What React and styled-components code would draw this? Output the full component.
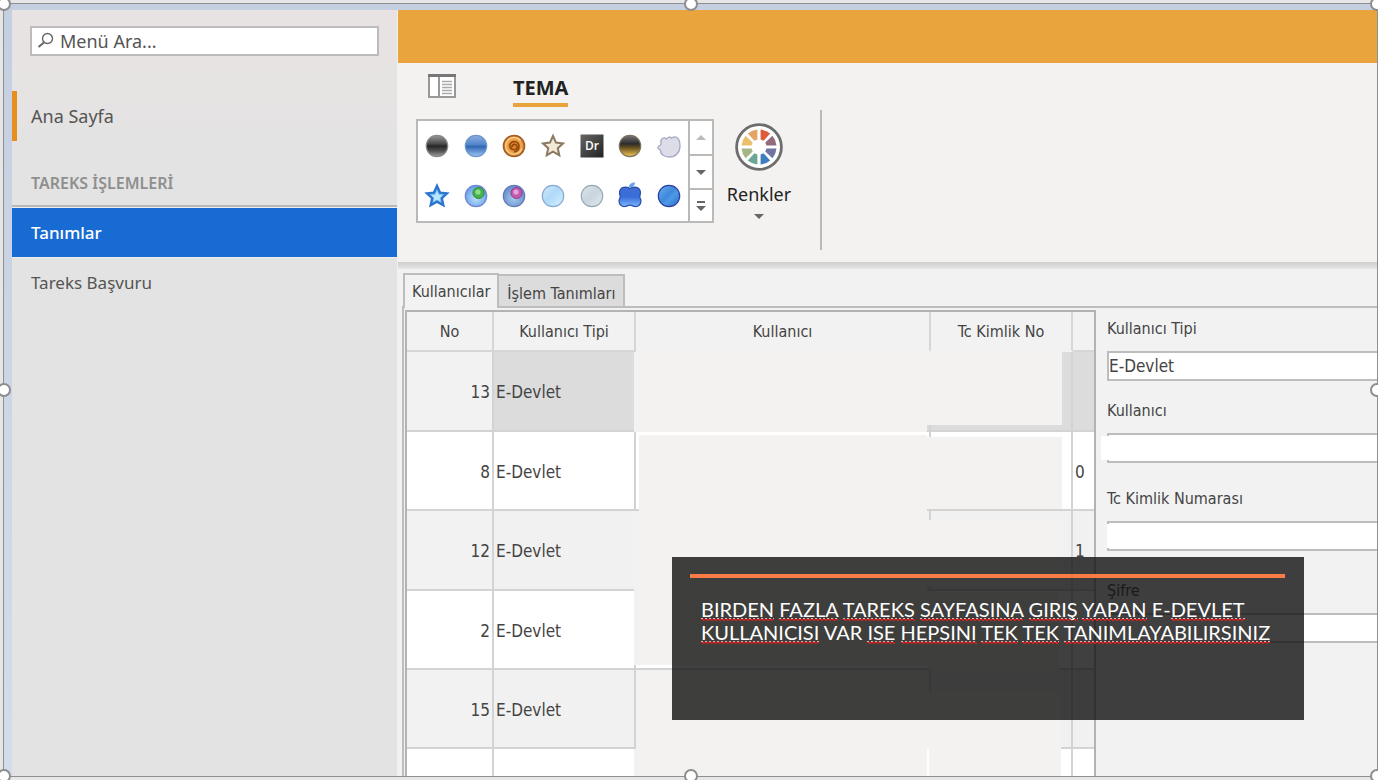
import React from "react";
import styled, { createGlobalStyle } from "styled-components";

const GlobalStyle = createGlobalStyle`
  * {
    box-sizing: border-box;
  }
  body {
    margin: 0;
    background: #e6e6e6;
    font-family: "DejaVu Sans Condensed", "Noto Sans", sans-serif;
    font-size: 16px;
    color: #444;
  }
  button,
  input {
    font: inherit;
    color: inherit;
  }
`;

const Slide = styled.div`
  height: 100vh;
  padding: 3px 0 3px 3px;
  overflow: hidden;
`;

const Frame = styled.div`
  position: relative;
  height: 100%;
  border: 1px solid #8f8f8f;
`;

const Handle = styled.span`
  position: absolute;
  left: ${({ $x }) => $x};
  top: ${({ $y }) => $y};
  width: 14px;
  height: 14px;
  border: 2px solid #8e8e8e;
  border-radius: 50%;
  background: #fff;
  transform: translate(-50%, -50%);
  z-index: 5;
`;

const Window = styled.div`
  display: flex;
  height: 100%;
  padding: 6px 0 0 8px;
  overflow: hidden;
  background: linear-gradient(#c4cfe1, #d3dcea);
`;

/* left menu */

const Sidebar = styled.aside`
  flex: 0 0 386px;
  border-right: 1px solid #f1f0f0;
  background: linear-gradient(#e8e3e2, #e3e3e3 160px, #e3e3e3);
  font-family: "Noto Sans", sans-serif;
`;

const SearchBox = styled.label`
  display: flex;
  align-items: center;
  gap: 5px;
  height: 30px;
  margin: 16px 18px 35px;
  padding: 0 5px;
  border: 2px solid #bdbcbc;
  background: #fff;
  input {
    flex: 1;
    min-width: 0;
    padding: 0;
    border: none;
    outline: none;
    background: none;
    font-size: 18px;
  }
  input::placeholder {
    color: #555;
    opacity: 1;
  }
`;

const MenuLink = styled.a`
  display: flex;
  align-items: center;
  height: 50px;
  padding-left: 14px;
  border-left: 5px solid ${({ $marked }) => ($marked ? "#e88e1d" : "transparent")};
  color: #555;
  font-size: 18px;
  text-decoration: none;
`;

const MenuTitle = styled.h2`
  display: flex;
  align-items: flex-end;
  height: 66px;
  margin: 0;
  padding: 0 0 11px 19px;
  border-bottom: 2px solid #b8b8b8;
  color: #8f8f8f;
  font-size: 16px;
  font-weight: 600;
  line-height: 22px;
`;

const SubLink = styled(MenuLink)`
  height: 48px;
  font-size: 17px;
`;

const SelectedLink = styled(MenuLink)`
  border: none;
  border-top: 1px solid #eee;
  border-bottom: 1px solid #eee;
  height: 51px;
  padding-left: 19px;
  background: #186bd3;
  color: #fff;
  font-size: 17px;
  font-weight: 500;
`;

/* ribbon */

const Main = styled.main`
  flex: 1;
  min-width: 0;
  display: flex;
  flex-direction: column;
  background: #f2f2f2;
`;

const TitleBar = styled.header`
  flex: 0 0 53px;
  background: #e9a43d;
`;

const Ribbon = styled.section`
  flex: 0 0 199px;
  background: #f3f2f1;
  font-family: "Noto Sans", sans-serif;
  color: #222;
`;

const RibbonTabs = styled.div`
  display: flex;
  align-items: flex-start;
  gap: 57px;
  height: 47px;
  padding: 11px 0 0 30px;
`;

const IconButton = styled.button`
  display: flex;
  padding: 0;
  border: none;
  background: none;
`;

const RibbonTab = styled.button`
  height: 33px;
  padding: 0 0 2px;
  border: none;
  border-bottom: 4px solid #e9a43d;
  background: none;
  font-size: 20px;
  font-weight: 700;
  line-height: 26px;
`;

const RibbonBody = styled.div`
  display: flex;
  align-items: flex-start;
  padding-left: 18px;
`;

const Gallery = styled.div`
  display: flex;
  width: 298px;
  height: 104px;
  margin-top: 9px;
  border: 2px solid #bbb9b7;
  background: #fff;
`;

const GalleryGrid = styled.div`
  flex: 1;
  display: grid;
  grid-template-columns: repeat(7, 1fr);
  grid-template-rows: repeat(2, 1fr);
  button {
    align-items: center;
    justify-content: center;
  }
`;

const GalleryScroll = styled.div`
  display: grid;
  grid-template-rows: repeat(3, 1fr);
  width: 24px;
  border-left: 2px solid #bbb9b7;
  button {
    align-items: center;
    justify-content: center;
  }
  button + button {
    border-top: 2px solid #bbb9b7;
  }
`;

const ColorsButton = styled.button`
  display: flex;
  flex-direction: column;
  align-items: center;
  width: 90px;
  margin-top: 13px;
  padding: 0;
  border: none;
  background: none;
  font-size: 18px;
  line-height: 26px;
  svg + span {
    margin-top: 10px;
    margin-bottom: 2px;
  }
`;

const RibbonSeparator = styled.div`
  width: 2px;
  height: 140px;
  margin-left: 16px;
  background: #bbb9b7;
`;

const RibbonShadow = styled.div`
  flex: 0 0 11px;
  background: linear-gradient(#cfcecd, #dedede 5px, #f2f2f2 8px);
`;

/* work area */

const TabList = styled.div`
  display: flex;
  align-items: flex-end;
  padding-left: 5px;
`;

const Tab = styled.button`
  height: ${({ $active }) => ($active ? "35px" : "32px")};
  margin-bottom: ${({ $active }) => ($active ? "-2px" : "0")};
  padding: ${({ $active }) => ($active ? "0 7px" : "5px 8px 0")};
  border: 2px solid #bdbdbd;
  border-bottom: none;
  border-left-width: ${({ $active }) => ($active ? "2px" : "0")};
  background: ${({ $active }) => ($active ? "#f2f2f2" : "#dcdcdc")};
  z-index: 1;
`;

const TabPane = styled.div`
  flex: 1;
  min-height: 0;
  display: flex;
  margin-left: 4px;
  padding: 2px 0 0 1px;
  border-top: 2px solid #bdbdbd;
  border-left: 2px solid #bdbdbd;
`;

const GridBox = styled.div`
  flex: 1;
  min-width: 0;
  overflow: hidden;
  border: 2px solid #b3b3b3;
  border-bottom: none;
  isolation: isolate;
`;

const Table = styled.table`
  width: 100%;
  table-layout: fixed;
  border-spacing: 0;
`;

const HeadCell = styled.th`
  width: ${({ $width }) => $width};
  height: 40px;
  padding: 0;
  border-right: 2px solid #d6d6d6;
  border-bottom: 2px solid ${({ $open }) => ($open ? "#f3f2f1" : "#d6d6d6")};
  font-weight: 400;
  white-space: nowrap;
  &:last-child {
    border-right: none;
  }
`;

const Row = styled.tr`
  height: ${({ $height }) => $height}px;
  background: ${({ $focused, $even }) => ($focused ? "#dcdcdc" : $even ? "#fff" : "#f1f1f1")};
  td:first-child {
    background: ${({ $even }) => ($even ? "#fff" : "#f2f2f2")};
  }
`;

const Cell = styled.td`
  position: relative;
  padding: 2px 2px 0;
  border-right: 2px solid #d3d3d3;
  border-bottom: 2px solid #d3d3d3;
  font-size: 17px;
  text-align: ${({ $align }) => $align || "left"};
  &:last-child {
    border-right: none;
  }
`;

const Mask = styled.span`
  position: absolute;
  inset: ${({ $inset }) => $inset};
  background: #f3f2f1;
  z-index: 1;
`;

const UserForm = styled.form`
  flex: 0 0 281px;
  display: grid;
  grid-template-rows: 82px 88px 92px auto;
  align-content: start;
  padding: 7px 0 0 11px;
`;

const Field = styled.div`
  position: relative;
  label {
    display: block;
    margin-bottom: 10px;
    line-height: 24px;
  }
  input {
    display: block;
    width: 100%;
    height: 30px;
    padding: 0;
    border: 2px solid #bdbdbd;
    border-right: none;
    border-radius: 0;
    background: #fff;
    font-size: 17px;
  }
`;

const FieldMask = styled.span`
  position: absolute;
  left: ${({ $left }) => $left};
  top: 37px;
  width: 20px;
  height: 24px;
  background: #fff;
`;

/* caption over the window */

const Caption = styled.section`
  position: absolute;
  right: 73px;
  bottom: 56px;
  width: 632px;
  height: 163px;
  padding: 17px 19px 0 18px;
  background: rgba(16, 16, 16, 0.8);
  color: #fff;
  z-index: 3;
  &::before {
    content: "";
    display: block;
    height: 4px;
    background: #fb7b47;
  }
  p {
    margin: 20px 0 0 11px;
    font-family: Lato, sans-serif;
    font-size: 20px;
    line-height: 23px;
    white-space: nowrap;
  }
`;

/* spell checker squiggle */
const Typo = styled.span`
  background-image: linear-gradient(90deg, #d9b5b5 50%, transparent 50%),
    linear-gradient(90deg, #e02020 75%, #8c2a2a 75%),
    linear-gradient(90deg, transparent 50%, #d02424 50%);
  background-repeat: repeat-x;
  background-size: 4px 1px;
  background-position: 0 calc(100% - 2px), 0 calc(100% - 1px), 0 100%;
`;

const starPath = "M12 2l3 6.600 7 .8-5.200 4.800 1.500 7L12 17.600 5.700 21.200l1.500-7L2 9.400l7-.8z";

const Gradients = () => (
  <svg width="0" height="0" style={{ display: "block" }} aria-hidden="true">
    <defs>
      <linearGradient id="black" x2="0" y2="1">
        <stop offset="0" stopColor="#9a9a9a" />
        <stop offset=".4" stopColor="#4a4a4a" />
        <stop offset=".5" stopColor="#262626" />
        <stop offset=".7" stopColor="#4a4a4a" />
        <stop offset="1" stopColor="#a0a0a0" />
      </linearGradient>
      <linearGradient id="blue" x2="0" y2="1">
        <stop offset="0" stopColor="#8db1e2" />
        <stop offset=".45" stopColor="#4f83c8" />
        <stop offset=".52" stopColor="#3166b2" />
        <stop offset="1" stopColor="#9cc8f5" />
      </linearGradient>
      <radialGradient id="copper">
        <stop offset="0" stopColor="#d98021" />
        <stop offset=".75" stopColor="#f0a850" />
        <stop offset="1" stopColor="#a6591a" />
      </radialGradient>
      <linearGradient id="dark" x2="1" y2="1">
        <stop offset="0" stopColor="#666" />
        <stop offset="1" stopColor="#222" />
      </linearGradient>
      <linearGradient id="gold" x2="0" y2="1">
        <stop offset="0" stopColor="#777" />
        <stop offset=".4" stopColor="#2b2b2b" />
        <stop offset=".6" stopColor="#6e5722" />
        <stop offset="1" stopColor="#f5c95a" />
      </linearGradient>
      <radialGradient id="orb" cy=".6">
        <stop offset="0" stopColor="#bfe2fb" />
        <stop offset="1" stopColor="#6ea5ea" />
      </radialGradient>
      <radialGradient id="dusk" cy=".6">
        <stop offset="0" stopColor="#a9cdee" />
        <stop offset="1" stopColor="#6a94cf" />
      </radialGradient>
      <linearGradient id="sky" x2="1" y2="1">
        <stop offset="0" stopColor="#cfeafc" />
        <stop offset=".45" stopColor="#b0daf8" />
        <stop offset=".6" stopColor="#b9e0fa" />
        <stop offset="1" stopColor="#d8f3ff" />
      </linearGradient>
      <linearGradient id="silver" x2="1" y2="1">
        <stop offset="0" stopColor="#dde5ea" />
        <stop offset=".5" stopColor="#c8d5dd" />
        <stop offset="1" stopColor="#e4edf2" />
      </linearGradient>
      <linearGradient id="apple" x2="0" y2="1">
        <stop offset="0" stopColor="#3f6fd4" />
        <stop offset=".5" stopColor="#3a6cd8" />
        <stop offset="1" stopColor="#7db6fb" />
      </linearGradient>
      <linearGradient id="deep" x2="1" y2="1">
        <stop offset="0" stopColor="#6fb0ee" />
        <stop offset=".45" stopColor="#3f88dc" />
        <stop offset=".6" stopColor="#4c9ae6" />
        <stop offset="1" stopColor="#2c6cc4" />
      </linearGradient>
    </defs>
  </svg>
);

const Ball = ({ fill, stroke }) => (
  <circle cx="12" cy="12" r="10.700" fill={`url(#${fill})`} stroke={stroke} strokeWidth="1.200" />
);

const skins = [
  { name: "Black", art: <Ball fill="black" stroke="#888" /> },
  { name: "Blue", art: <Ball fill="blue" stroke="#6f96c8" /> },
  {
    name: "Caramel",
    art: (
      <>
        <Ball fill="copper" stroke="#a25a22" />
        <path d="M18.500 6.500A8.400 8.400 0 1 0 20 14.500" fill="none" stroke="#fbd08c" strokeWidth="1.200" />
        <path d="M10 13.500a2.600 2.600 0 1 1 3 2c-4 1-6.500-3-4.500-6 2.500-3.500 8.500-2 8.500 3 0 3-2 5-5 5.500" fill="none" stroke="#99490c" strokeWidth="1.700" />
      </>
    ),
  },
  { name: "Coffee", art: <path d={starPath} fill="#f3e9d8" stroke="#8b7963" strokeWidth="2" /> },
  {
    name: "Darkroom",
    art: (
      <>
        <rect x=".5" y=".5" width="23" height="23" fill="url(#dark)" />
        <text x="12" y="16" textAnchor="middle" fontFamily="Open Sans, sans-serif" fontSize="12" fontWeight="600" fill="#fff">Dr</text>
      </>
    ),
  },
  { name: "Gold", art: <Ball fill="gold" stroke="#7b725e" /> },
  {
    name: "Foggy",
    art: (
      <path
        d="M4 9C3 5 7 2.500 9.500 5c1.500-2.500 4-2.500 5-.8C20 .5 23 5.500 23 12c0 6.500-4.500 11-10.500 11C7 23 3 20 3.500 16 .5 15 .5 13.500 1.500 12.500 3 11.500 4.500 11 4 9z"
        fill="#dcdde9"
        stroke="#a7a9c2"
        strokeWidth="1.300"
      />
    ),
  },
  {
    name: "Star",
    art: (
      <>
        <path d={starPath} fill="#7fc4f5" stroke="#2f74cf" strokeWidth="2.400" />
        <path d="M12 7l1.700 4 3.800.4-2.900 2.500.8 3.600-3.400-2-3.400 2 .8-3.600-2.900-2.500 3.800-.4z" fill="#b9e8fd" />
      </>
    ),
  },
  {
    name: "Green Orb",
    art: (
      <>
        <Ball fill="orb" stroke="#6f83cf" />
        <circle cx="14.500" cy="9" r="5.600" fill="#48b14d" stroke="#2b8a3c" />
        <circle cx="14" cy="8" r="2.600" fill="#8fdc8e" />
      </>
    ),
  },
  {
    name: "Pink Orb",
    art: (
      <>
        <Ball fill="dusk" stroke="#6579b8" />
        <circle cx="14.500" cy="9" r="5.600" fill="#c159ac" stroke="#943f8d" />
        <circle cx="14" cy="8" r="2.600" fill="#e8a3dc" />
      </>
    ),
  },
  { name: "Sky", art: <Ball fill="sky" stroke="#86a9d0" /> },
  { name: "Silver", art: <Ball fill="silver" stroke="#98a9b5" /> },
  {
    name: "Apple",
    art: (
      <>
        <path
          d="M12 4.500C9 2 1.500 2.500 1.500 9c0 1.500.7 2 .7 3.500C2.200 14.500 1 15 1 17c0 3.500 3 6 6 5.500 2-.3 3-1.300 5-1.300s3 1 5 1.300c3 .5 6-2 6-5.500 0-2-1.200-2.500-1.200-4.500 0-1.500.7-2 .7-3.500C22.500 2.500 15 2 12 4.500z"
          fill="url(#apple)"
          stroke="#254ea6"
          strokeWidth="1.200"
        />
        <path d="M11 3.500c-.5-3 2.500-5.500 6-5 0 3-2.500 5-6 5z" fill="#6ba2ef" />
      </>
    ),
  },
  { name: "Deep Blue", art: <Ball fill="deep" stroke="#2c3fa0" /> },
];

const wheel = ["#dc5c3c", "#936a7c", "#6f74a0", "#3f7fc0", "#6aa595", "#a5b585", "#ebc06d", "#e6a366"];

const ColorWheel = () => (
  <svg width="48" height="48" viewBox="0 0 48 48">
    <circle cx="24" cy="24" r="22.400" fill="#fff" stroke="#6d6d6d" strokeWidth="2.800" />
    {wheel.map((color, i) => (
      <path
        key={color}
        d={i % 2 ? "M12.800 10.600A17.500 17.500 0 0 1 22.400 6.500V16.500L19.400 17.700z" : "M25.600 6.500A17.500 17.500 0 0 1 35.200 10.600L28.600 17.700 25.600 16.500z"}
        fill={color}
        transform={`rotate(${i % 2 ? (i + 1) * 45 : i * 45} 24 24)`}
      />
    ))}
  </svg>
);

const Arrow = ({ color = "#666", up, bar }) => (
  <svg width="10" height="14" viewBox="0 0 10 14">
    {bar && <path d="M1 4h8" stroke={color} strokeWidth="2" />}
    <path d={up ? "M0 9l5-5 5 5z" : bar ? "M0 8h10l-5 5z" : "M0 5h10l-5 5z"} fill={color} />
  </svg>
);

const rows = [
  { no: 13, height: 80, user: "0 2px -2px -2px", tc: "0 9px 5px -4px" },
  { no: 8, height: 79, user: "3px 2px -2px 3px", tc: "5px 9px 0 -4px", last: "0" },
  { no: 12, height: 80, user: "0 2px -2px -2px", tc: "9px 9px 3px -4px", last: "1" },
  { no: 2, height: 79, user: "0 -2px 3px -2px", tc: "1px 12px -2px -2px" },
  { no: 15, height: 79, user: "1px 0 -2px 0", tc: "21px 10px -2px -2px" },
  { height: 79, user: "0 2px 0 -2px", tc: "0 10px 0 -2px" },
];

const fields = [
  { id: "type", label: "Kullanıcı Tipi", value: "E-Devlet" },
  { id: "user", label: "Kullanıcı", mask: "-6px" },
  { id: "tc", label: "Tc Kimlik Numarası", mask: "0" },
  { id: "password", label: "Şifre" },
];

const handles = [
  ["0%", "0%"],
  ["50%", "0%"],
  ["100%", "0%"],
  ["0%", "50%"],
  ["100%", "50%"],
  ["0%", "100%"],
  ["50%", "100%"],
  ["100%", "100%"],
];

const UserGrid = () => (
  <GridBox>
    <Table>
      <thead>
        <tr>
          <HeadCell $width="87px">No</HeadCell>
          <HeadCell $width="142px">Kullanıcı Tipi</HeadCell>
          <HeadCell $open>Kullanıcı</HeadCell>
          <HeadCell $width="142px" $open>Tc Kimlik No</HeadCell>
          <HeadCell $width="21px" />
        </tr>
      </thead>
      <tbody>
        {rows.map((row, i) => (
          <Row key={i} $height={row.height} $even={i % 2 === 1} $focused={i === 0}>
            <Cell $align="right">{row.no}</Cell>
            <Cell>{row.no && "E-Devlet"}</Cell>
            <Cell><Mask $inset={row.user} /></Cell>
            <Cell><Mask $inset={row.tc} /></Cell>
            <Cell>{row.last}</Cell>
          </Row>
        ))}
      </tbody>
    </Table>
  </GridBox>
);

const App = () => {
  return (
    <Slide>
      <GlobalStyle />
      <Gradients />
      <Frame>
        <Window>
          <Sidebar>
            <SearchBox>
              <svg width="18" height="18" viewBox="0 0 18 18" fill="none" stroke="#666" strokeWidth="1.400">
                <circle cx="10.500" cy="6.500" r="5" />
                <path d="M7 10.500L1.500 15" strokeWidth="2" />
              </svg>
              <input type="text" placeholder="Menü Ara..." aria-label="Menü Ara" />
            </SearchBox>
            <nav>
              <MenuLink href="#home" $marked>Ana Sayfa</MenuLink>
              <MenuTitle>TAREKS İŞLEMLERİ</MenuTitle>
              <SelectedLink href="#definitions">Tanımlar</SelectedLink>
              <SubLink href="#application">Tareks Başvuru</SubLink>
            </nav>
          </Sidebar>
          <Main>
            <TitleBar />
            <Ribbon>
              <RibbonTabs>
                <IconButton aria-label="Menu">
                  <svg width="28" height="24" viewBox="0 0 28 24">
                    <rect x="1" y="1" width="26" height="22" fill="#fff" stroke="#999" strokeWidth="2" />
                    <path d="M0 1.500h28" stroke="#777" strokeWidth="3" />
                    <path d="M11 3v19" stroke="#999" strokeWidth="2" />
                    <path d="M14 7.500h10M14 10.500h10M14 13.500h10M14 16.500h10M14 19.500h10" stroke="#aaa" strokeWidth="1.500" />
                  </svg>
                </IconButton>
                <RibbonTab>TEMA</RibbonTab>
              </RibbonTabs>
              <RibbonBody>
                <Gallery>
                  <GalleryGrid>
                    {skins.map((skin) => (
                      <IconButton key={skin.name} aria-label={skin.name}>
                        <svg width="24" height="24" viewBox="0 0 24 24" overflow="visible">{skin.art}</svg>
                      </IconButton>
                    ))}
                  </GalleryGrid>
                  <GalleryScroll>
                    <IconButton aria-label="Up"><Arrow up color="#bbb" /></IconButton>
                    <IconButton aria-label="Down"><Arrow /></IconButton>
                    <IconButton aria-label="More"><Arrow bar /></IconButton>
                  </GalleryScroll>
                </Gallery>
                <ColorsButton>
                  <ColorWheel />
                  <span>Renkler</span>
                  <Arrow />
                </ColorsButton>
                <RibbonSeparator />
              </RibbonBody>
            </Ribbon>
            <RibbonShadow />
            <TabList role="tablist">
              <Tab role="tab" $active>Kullanıcılar</Tab>
              <Tab role="tab">İşlem Tanımları</Tab>
            </TabList>
            <TabPane>
              <UserGrid />
              <UserForm>
                {fields.map((field) => (
                  <Field key={field.id}>
                    <label htmlFor={field.id}>{field.label}</label>
                    <input id={field.id} type={field.id === "password" ? "password" : "text"} defaultValue={field.value} />
                    {field.mask && <FieldMask $left={field.mask} />}
                  </Field>
                ))}
              </UserForm>
            </TabPane>
          </Main>
        </Window>
        <Caption>
          <p>
            <Typo>BIRDEN</Typo> <Typo>FAZLA</Typo> <Typo>TAREKS</Typo> <Typo>SAYFASINA</Typo> <Typo>GIRIŞ</Typo> <Typo>YAPAN</Typo> E-<Typo>DEVLET</Typo>
            <br />
            <Typo>KULLANICISI</Typo> VAR <Typo>ISE</Typo> <Typo>HEPSINI</Typo> <Typo>TEK</Typo> <Typo>TEK</Typo> <Typo>TANIMLAYABILIRSINIZ</Typo>
          </p>
        </Caption>
        {handles.map(([x, y]) => (
          <Handle key={x + y} $x={x} $y={y} />
        ))}
      </Frame>
    </Slide>
  );
};

export default App;
